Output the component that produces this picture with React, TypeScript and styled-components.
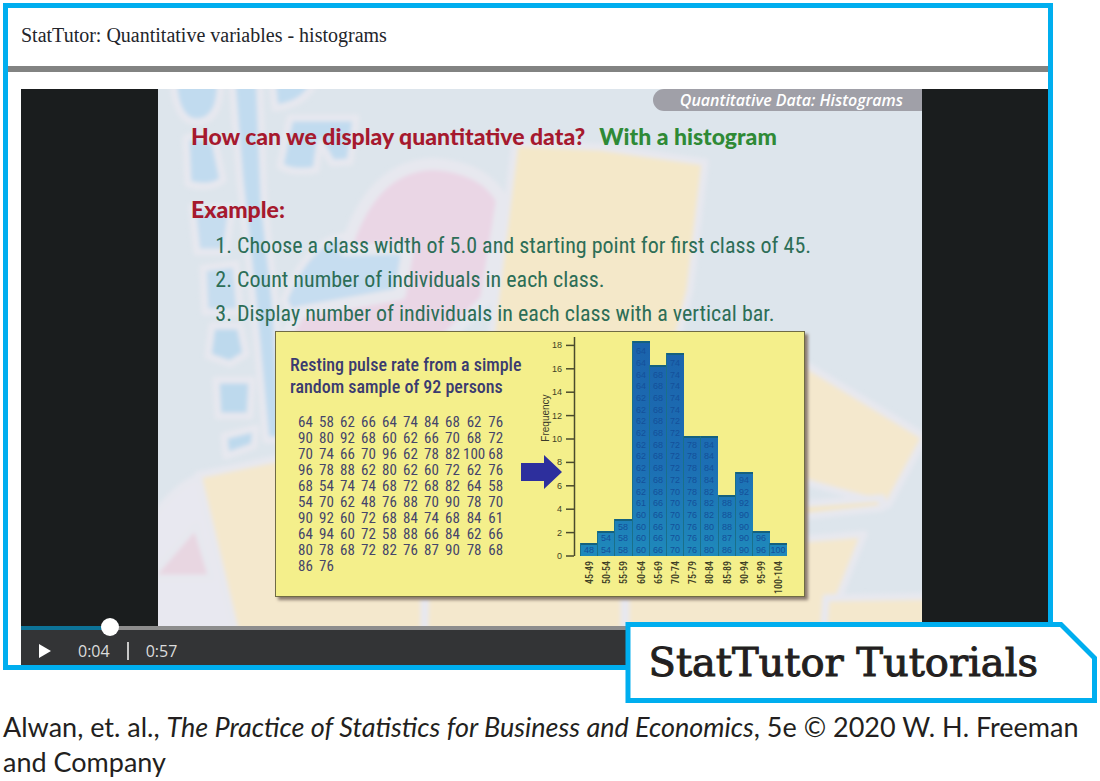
import React from "react";
import styled, { createGlobalStyle } from "styled-components";

const GlobalStyle = createGlobalStyle`
  * { box-sizing: border-box; }
  body { margin: 0; background: #fff; color: #231f20; }
`;

const narrow = `"Roboto Condensed", "Liberation Sans Narrow", "Liberation Sans", sans-serif`;

const Page = styled.main`
  padding: 3px;
`;

const Figure = styled.figure`
  margin: 0;
`;

const Stage = styled.div`
  position: relative;
  padding-right: 44px;
`;

const Frame = styled.section`
  border: 5px solid #00aeef;
  background: #fff;
`;

const FrameHeader = styled.header`
  padding: 15px 13px 19px;
  border-bottom: 6px solid #828382;
`;

const FrameTitle = styled.h1`
  margin: 0;
  font: 400 20px/24px "Liberation Serif", serif;
  color: #23252b;
`;

const Player = styled.div`
  margin: 17px 0 0 13px;
  background: #1a1d1e;
`;

const Screen = styled.div`
  display: grid;
  grid-template-columns: 137fr 764fr 126fr;
`;

const Slide = styled.div`
  grid-column: 2;
  display: grid;
  background: #dde5ec;
  overflow: hidden;
`;

const Backdrop = styled.svg`
  grid-area: 1 / 1;
  width: 100%;
  height: 100%;
  min-height: 0;
`;

const SlideBody = styled.div`
  grid-area: 1 / 1;
  display: flex;
  flex-direction: column;
  padding-bottom: 28px;
`;

const Ribbon = styled.div`
  align-self: flex-end;
  padding: 0 19px 0 27px;
  border-radius: 11px 0 0 11px;
  background: #a0a0a8;
  color: #fff;
  font: italic 600 16px/22px "Open Sans", sans-serif;
`;

const Heading = styled.h2<{ $gap: number }>`
  margin: ${(p) => p.$gap}px 0 0 33px;
  font: 900 23px/28px Lato, sans-serif;
  color: #a6192e;
`;

const Answer = styled.span`
  margin-left: 14px;
  color: #2f8a36;
`;

const Steps = styled.ol`
  margin: 6px 0 0 79px;
  padding: 0;
  font: 400 22px/34px ${narrow};
  color: #2d6e57;
`;

const Panel = styled.div`
  display: flex;
  width: 530px;
  margin-left: 117px;
  border: 1px solid #6f6b45;
  background: #f4ef8b;
  box-shadow: 3px 3px 3px #8a7a6e;
`;

const Sample = styled.div`
  flex: 1;
  min-width: 0;
  padding: 22px 0 0 14px;
`;

const SampleTitle = styled.p`
  margin: 0 0 16px;
  font: 500 18px/22px ${narrow};
  color: #3b3b70;
  white-space: nowrap;
`;

const DataTable = styled.table`
  margin-left: 5px;
  border-collapse: collapse;
  font: 400 15px/16px ${narrow};
  color: #45456a;

  td {
    width: 21px;
    padding: 0;
    text-align: center;
  }
`;

const Chart = styled.svg`
  flex: none;
  display: block;
`;

const Seek = styled.input`
  appearance: none;
  display: block;
  width: 100%;
  height: 18px;
  margin: -8px 0 -6px;
  background: linear-gradient(to right, #0d7398 9%, #8d8d8d 9%) 0 8px / 100% 4px no-repeat;
  position: relative;

  &::-webkit-slider-thumb {
    appearance: none;
    width: 18px;
    height: 18px;
    border-radius: 50%;
    background: #fff;
  }
`;

const Controls = styled.div`
  display: flex;
  align-items: center;
  height: 35px;
  padding: 6px 17px 0;
  background: #333436;
  color: #dcdcdc;
  font: 400 16px/20px "Open Sans", sans-serif;
`;

const PlayButton = styled.button`
  display: flex;
  padding: 0;
  margin-right: 27px;
  border: 0;
  background: none;
`;

const Divider = styled.span`
  width: 2px;
  height: 18px;
  margin: 0 17px;
  background: #c8c8c8;
`;

const Badge = styled.div`
  position: absolute;
  right: 0;
  bottom: -33px;
  padding: 5px;
  background: #00aeef;
  clip-path: polygon(0 0, calc(100% - 35px) 0, 100% 35px, 100% 100%, 0 100%);
`;

const BadgeLabel = styled.div`
  padding: 0 54px 0 18px;
  background: #fff;
  clip-path: polygon(0 0, calc(100% - 32px) 0, 100% 32px, 100% 100%, 0 100%);
  font: 400 40px/71px "DejaVu Serif", serif;
  -webkit-text-stroke: 1px #231f20;
  white-space: nowrap;
`;

const Caption = styled.figcaption`
  padding-top: 39px;
  font: 400 27px/35px Lato, sans-serif;
`;

const sample = [
  [64, 58, 62, 66, 64, 74, 84, 68, 62, 76],
  [90, 80, 92, 68, 60, 62, 66, 70, 68, 72],
  [70, 74, 66, 70, 96, 62, 78, 82, 100, 68],
  [96, 78, 88, 62, 80, 62, 60, 72, 62, 76],
  [68, 54, 74, 74, 68, 72, 68, 82, 64, 58],
  [54, 70, 62, 48, 76, 88, 70, 90, 78, 70],
  [90, 92, 60, 72, 68, 84, 74, 68, 84, 61],
  [64, 94, 60, 72, 58, 88, 66, 84, 62, 66],
  [80, 78, 68, 72, 82, 76, 87, 90, 78, 68],
  [86, 76],
];

const frequencies = [1, 2, 3, 18, 16, 17, 10, 10, 5, 7, 2, 1];
const ticks = [0, 2, 4, 6, 8, 10, 12, 14, 16, 18];

const bars = frequencies.map((count, i) => {
  const low = 45 + i * 5;
  const values = sample
    .flat()
    .filter((v) => v >= low && v < low + 5)
    .sort((a, b) => a - b)
    .slice(0, count);
  return { values, label: `${low}-${low + 4}`, x: 65 + Math.round(i * 17.2), height: Math.round(count * 11.9 + 1) };
});

const BASE = 224;

function Histogram() {
  return (
    <Chart width="289" height="264" viewBox="0 0 289 264" role="img" aria-label="Histogram of resting pulse rate">
      <defs>
        <linearGradient id="bar" x1="0" y1="0" x2="0" y2={BASE} gradientUnits="userSpaceOnUse">
          <stop offset="0" stopColor="#1b62ab" />
          <stop offset="0.6" stopColor="#1c6fb4" />
          <stop offset="1" stopColor="#1f8abb" />
        </linearGradient>
      </defs>
      <g stroke="#4a4a2c" strokeWidth="1.5">
        <path d={`M59.500 5V${BASE}`} />
        {ticks.map((t) => (
          <path key={t} d={`M51 ${BASE - t * 11.7}H59`} />
        ))}
      </g>
      <g fontFamily="Liberation Sans" fontSize="9" fill="#3f3f26" textAnchor="end">
        {ticks.map((t) => (
          <text key={t} x="47" y={BASE + 3 - t * 11.7}>{t}</text>
        ))}
      </g>
      <text transform="translate(34 86) rotate(-90)" textAnchor="middle" fontFamily="Liberation Sans" fontSize="10" fill="#3a3a2a">
        Frequency
      </text>
      {bars.map((b) => (
        <g key={b.label}>
          <rect x={b.x} y={BASE - b.height} width="18" height={b.height} fill="url(#bar)" />
          <path d={`M${b.x} ${BASE - b.height + 1}h18`} stroke="#14617f" strokeWidth="2" />
          <path d={`M${b.x + 0.5} ${BASE - b.height}V${BASE}`} stroke="#1a7089" />
          {b.values.map((v, k) => (
            <text key={k} x={b.x + 9} y={BASE - 3 - k * 11.7} textAnchor="middle" fontFamily="Liberation Sans" fontSize="9" fill="#14509a">
              {v}
            </text>
          ))}
          <text
            transform={`translate(${b.x + 13} 229) rotate(-90)`}
            textAnchor="end"
            fontFamily={narrow}
            fontSize="10"
            fontWeight="500"
            fill="#3f3f26"
          >
            {b.label}
          </text>
        </g>
      ))}
      <path d="M6 131H29V123L47 140L29 157V149H6Z" fill="#2d2f9d" />
    </Chart>
  );
}

function SlideArt() {
  return (
    <Backdrop viewBox="158 89 764 537" preserveAspectRatio="none" aria-hidden="true">
      <defs>
        <filter id="soft" x="-5%" y="-5%" width="110%" height="110%">
          <feGaussianBlur stdDeviation="2" />
        </filter>
      </defs>
      <g filter="url(#soft)" stroke="#e7e8ef" strokeWidth="7" strokeLinejoin="round">
        <path d="M150 520Q190 470 205 480L245 650H150Z" fill="#e8e8f0" />
        <path d="M231 70H259L264 200L275 300L284 440H266L253 300L240 180Z" fill="#c1dbef" />
        <path d="M173 70H220Q224 122 196 122Q173 120 173 70Z" fill="#c1dbef" />
        <path d="M271 70H318Q312 104 275 108Z" fill="#c1dbef" />
        <path d="M186 138Q204 132 215 142L223 180Q210 190 188 184Z" fill="#c1dbef" />
        <path d="M290 118H356L350 162L332 163L320 142L316 170Q292 174 280 166Z" fill="#c1dbef" />
        <path d="M192 207H232L226 252H197Z" fill="#c6ddef" />
        <path d="M203 268L236 264L240 312H205Z" fill="#c6ddef" />
        <path d="M212 326H240L246 354L230 364L208 356Z" fill="#bdd9ed" />
        <path d="M216 380H252L250 416H218Z" fill="#bdd9ed" />
        <path d="M224 436L256 428L254 446L226 456Z" fill="#bdd9ed" />
        <path d="M284 300Q310 235 350 236L405 250L400 298L290 312Z" fill="#c6ddf0" />
        <path d="M345 250Q372 164 435 164Q485 168 502 200L486 300L440 345H280L300 312L400 294L408 248Z" fill="#ead6e5" strokeWidth="12" />
        <path d="M515 143L600 147L705 162L690 290L676 345H490Z" fill="#f4e8c9" />
        <path d="M198 475L280 458H424V650H240Z" fill="#f4e8cd" />
        <path d="M150 578L196 525L212 578Z" fill="#e8d6e1" />
        <path d="M790 355L925 437L888 505L780 475Z" fill="#f4e8cd" />
        <path d="M790 505L882 498V508L790 518Z" fill="#f4e6c4" />
        <path d="M790 540L864 534L818 650H626V590Z" fill="#f4e8cd" />
        <path d="M426 590H624V650H424Z" fill="#f4e8cd" />
        <path d="M826 598L935 596V650H822Z" fill="#f4e8cd" />
      </g>
    </Backdrop>
  );
}

export default function App() {
  return (
    <Page>
      <GlobalStyle />
      <Figure>
        <Stage>
          <Frame>
            <FrameHeader>
              <FrameTitle>StatTutor: Quantitative variables - histograms</FrameTitle>
            </FrameHeader>
            <Player>
              <Screen>
                <Slide>
                  <SlideArt />
                  <SlideBody>
                    <Ribbon>Quantitative Data: Histograms</Ribbon>
                    <Heading $gap={11}>
                      How can we display quantitative data?
                      <Answer>With a histogram</Answer>
                    </Heading>
                    <Heading $gap={45}>Example:</Heading>
                    <Steps>
                      <li>Choose a class width of 5.0 and starting point for first class of 45.</li>
                      <li>Count number of individuals in each class.</li>
                      <li>Display number of individuals in each class with a vertical bar.</li>
                    </Steps>
                    <Panel>
                      <Sample>
                        <SampleTitle>
                          Resting pulse rate from a simple
                          <br />
                          random sample of 92 persons
                        </SampleTitle>
                        <DataTable aria-label="Resting pulse rates">
                          <tbody>
                            {sample.map((row, r) => (
                              <tr key={r}>
                                {row.map((v, c) => (
                                  <td key={c}>{v}</td>
                                ))}
                              </tr>
                            ))}
                          </tbody>
                        </DataTable>
                      </Sample>
                      <Histogram />
                    </Panel>
                  </SlideBody>
                </Slide>
              </Screen>
              <Seek type="range" min="0" max="57" step="0.5" defaultValue="4.5" aria-label="Seek" />
              <Controls>
                <PlayButton type="button" aria-label="Play">
                  <svg width="13" height="16" viewBox="0 0 13 16">
                    <path d="M1 1L13 8L1 15Z" fill="#fff" />
                  </svg>
                </PlayButton>
                <span>0:04</span>
                <Divider />
                <span>0:57</span>
              </Controls>
            </Player>
          </Frame>
          <Badge>
            <BadgeLabel>StatTutor Tutorials</BadgeLabel>
          </Badge>
        </Stage>
        <Caption>
          Alwan, et. al., <em>The Practice of Statistics for Business and Economics</em>, 5e © 2020 W. H. Freeman and Company
        </Caption>
      </Figure>
    </Page>
  );
}
